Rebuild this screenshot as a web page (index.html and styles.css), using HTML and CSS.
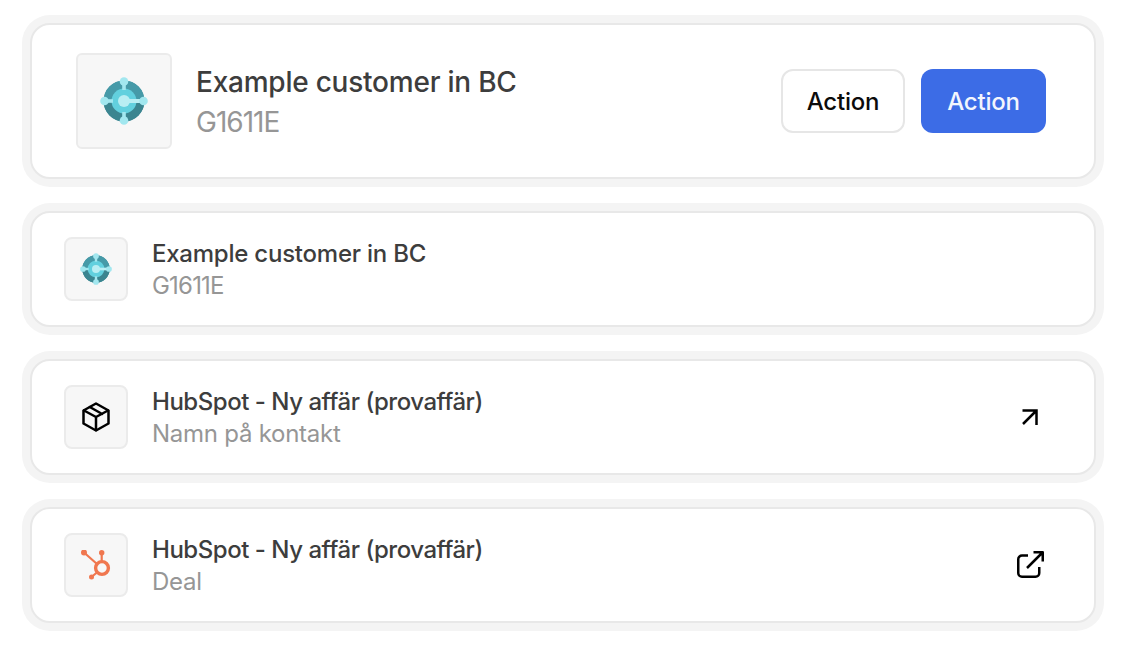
FILE: index.html
```html
<!DOCTYPE html>
<html lang="sv">
<head>
<meta charset="utf-8">
<title>Cards</title>
<link rel="stylesheet" href="styles.css">
</head>
<body>
<svg class="defs" width="0" height="0" aria-hidden="true">
  <defs>
    <g id="bc">
      <circle cx="24" cy="24" r="20.500" fill="#3f8f9c"/>
      <path d="M3.500 24a20.500 20.500 0 0 1 41 0z" fill="#469aa8"/>
      <path d="M3.500 24a20.500 20.500 0 0 0 41 0z" fill="#3b8590"/>
      <circle cx="24" cy="24" r="12.500" fill="#62d0de"/>
      <circle cx="24" cy="24" r="6" fill="#b9eef3"/>
      <rect x="24" y="22" width="19" height="4" fill="#b9eef3"/>
      <rect x="22.200" y="5" width="3.600" height="8" fill="#a2e7ef"/>
      <rect x="22.200" y="35" width="3.600" height="8" fill="#a2e7ef"/>
      <rect x="5" y="22.200" width="8" height="3.600" fill="#a2e7ef"/>
      <circle cx="24" cy="4.500" r="4.300" fill="#a2e7ef"/>
      <circle cx="24" cy="43.500" r="4.300" fill="#a2e7ef"/>
      <circle cx="4.500" cy="24" r="4.300" fill="#a2e7ef"/>
      <circle cx="43.500" cy="24" r="4.300" fill="#a2e7ef"/>
    </g>
  </defs>
</svg>
<main class="stack">
  <section class="shell">
    <div class="card card-large">
      <div class="tile tile-large">
        <svg class="logo-large" viewBox="0 0 48 48"><use href="#bc"/></svg>
      </div>
      <div class="text text-large">
        <div class="title">Example customer in BC</div>
        <div class="sub code">G1611E</div>
      </div>
      <div class="actions">
        <button class="btn btn-outline">Action</button>
        <button class="btn btn-primary">Action</button>
      </div>
    </div>
  </section>
  <section class="shell">
    <div class="card card-small">
      <div class="tile">
        <svg class="logo-small" viewBox="0 0 48 48"><use href="#bc"/></svg>
      </div>
      <div class="text">
        <div class="title">Example customer in BC</div>
        <div class="sub code">G1611E</div>
      </div>
    </div>
  </section>
  <section class="shell">
    <div class="card card-small">
      <div class="tile">
        <svg class="icon-box" viewBox="0 0 28 30" fill="none" stroke="#000" stroke-width="2.500" stroke-linejoin="round" stroke-linecap="round">
          <path d="M14 1.500 26.500 8.500v13L14 28.500 1.500 21.500v-13z"/>
          <path d="M2 8.500 14 15l12-6.500M14 15v13M7.800 5 20.200 12"/>
        </svg>
      </div>
      <div class="text">
        <div class="title title-tight">HubSpot - Ny affär (provaffär)</div>
        <div class="sub">Namn på kontakt</div>
      </div>
      <svg class="icon-arrow" viewBox="0 0 16 16" fill="none" stroke="#000" stroke-width="2.500">
        <path d="M.500 1.500h14V16M14.500 1.500 1 15"/>
      </svg>
    </div>
  </section>
  <section class="shell">
    <div class="card card-small">
      <div class="tile">
        <svg class="icon-hub" viewBox="0 0 30 30" fill="none">
          <path d="M20.700 3v9M3 2.500 16 14M10.500 27l6-5" stroke="#f0774f" stroke-width="2.200"/>
          <circle cx="21" cy="18" r="6.400" stroke="#f0774f" stroke-width="3.400"/>
          <circle cx="3" cy="2.500" r="3" fill="#f0774f"/>
          <circle cx="20.700" cy="2.700" r="2.700" fill="#f0774f"/>
          <circle cx="10.500" cy="27" r="2.500" fill="#f0774f"/>
        </svg>
      </div>
      <div class="text">
        <div class="title title-tight">HubSpot - Ny affär (provaffär)</div>
        <div class="sub">Deal</div>
      </div>
      <svg class="icon-ext" viewBox="0 0 27 27" fill="none" stroke="#000" stroke-width="2.500" stroke-linejoin="round">
        <path d="M11 4.500H5A3.750 3.750 0 0 0 1.250 8.250V22A3.750 3.750 0 0 0 5 25.750h13.500A3.750 3.750 0 0 0 22.250 22v-6"/>
        <path d="M16.500 1.250h9.250v9.250M25.250 1.750 10 17"/>
      </svg>
    </div>
  </section>
</main>
</body>
</html>
```

FILE: styles.css
```css
* { box-sizing: border-box; }
html, body { margin: 0; background: #fff; }
body { font-family: "Inter", "Liberation Sans", sans-serif; }
.defs { position: absolute; }
.stack { display: flex; flex-direction: column; gap: 16px; padding: 15px 26px 0 22px; }
.shell { border-radius: 28px; background: #f4f4f4; padding: 8px; }
.card { display: flex; align-items: center; background: #fff; border: 2px solid #e8e8e8; border-radius: 20px; }
.card-large { height: 156px; padding: 0 48px 0 44px; }
.card-small { height: 116px; padding: 0 50px 0 32px; }
.tile { flex: none; display: flex; align-items: center; justify-content: center; width: 64px; height: 64px; background: #f7f7f7; border: 2px solid #ebebeb; border-radius: 8px; }
.tile-large { width: 96px; height: 96px; border-radius: 6px; }
.text { flex: 1; margin-left: 24px; padding-top: 1px; }
.title { font-size: 24px; line-height: 32px; color: #3d3d3d; font-weight: 500; letter-spacing: -0.23px; }
.title-tight { letter-spacing: -0.47px; }
.sub { font-size: 24px; line-height: 32px; color: #969696; letter-spacing: -0.25px; }
.sub.code { letter-spacing: -0.8px; }
.text-large { padding-top: 1px; }
.text-large .title, .text-large .sub { font-size: 28px; line-height: 40px; }
.text-large .title { letter-spacing: -0.23px; }
.text-large .sub.code { letter-spacing: -1px; }
.actions { display: flex; gap: 16px; }
.btn { height: 64px; padding: 0; border-radius: 12px; font: 500 24px "Inter", "Liberation Sans", sans-serif; letter-spacing: -0.2px; }
.btn-outline { width: 124px; background: #fff; border: 2px solid #e6e6e6; color: #0b0b0b; }
.btn-primary { width: 125px; background: #3c6ce6; border: 0; color: #f3f6fd; }
.logo-large { width: 48px; height: 48px; }
.logo-small { width: 32px; height: 32px; }
.icon-box { width: 28px; height: 30px; }
.icon-arrow { width: 16px; height: 16px; margin-right: 6px; }
.icon-hub { width: 30px; height: 30px; }
.icon-ext { width: 27px; height: 27px; margin-bottom: 2px; }
```
